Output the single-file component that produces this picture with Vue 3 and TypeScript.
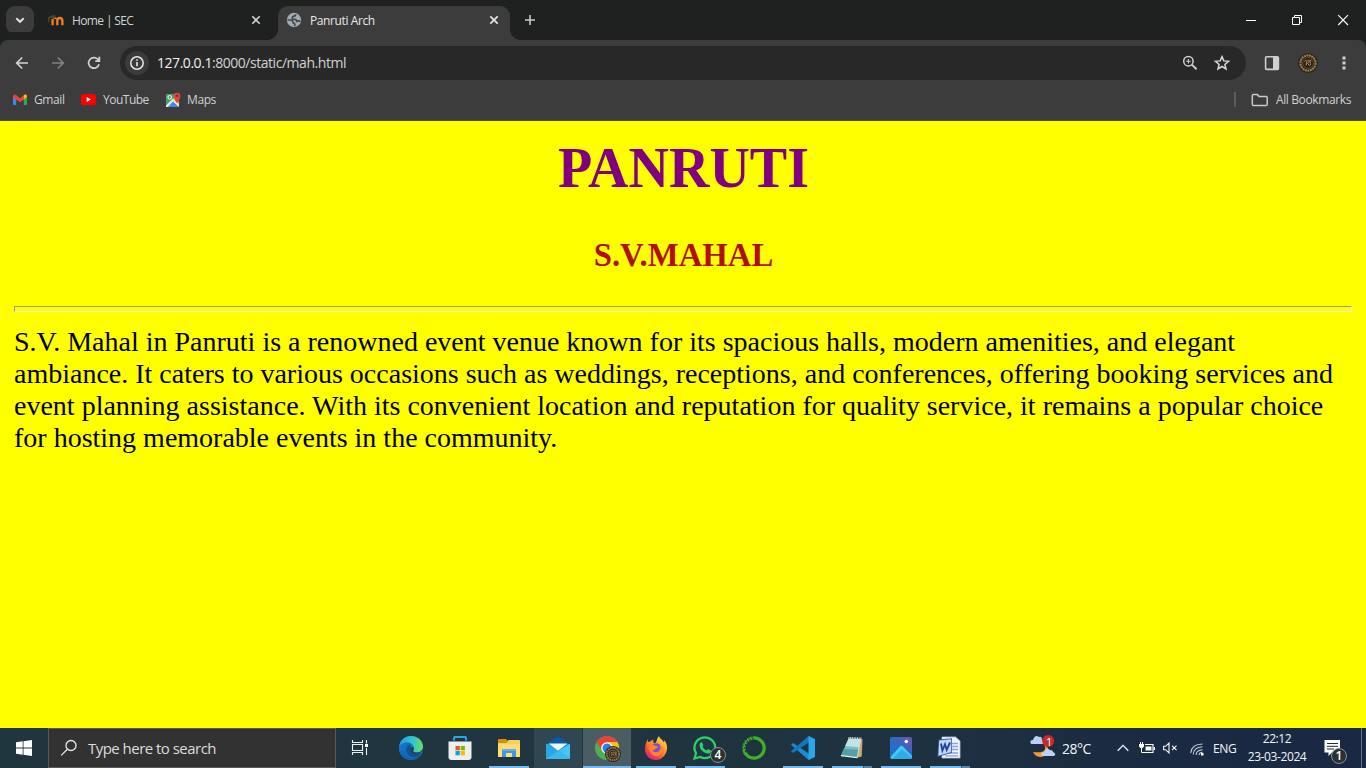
<script setup lang="ts">
const lines: string[] = [
  'S.V. Mahal in Panruti is a renowned event venue known for its spacious halls, modern amenities, and elegant',
  'ambiance. It caters to various occasions such as weddings, receptions, and conferences, offering booking services and',
  'event planning assistance. With its convenient location and reputation for quality service, it remains a popular choice',
  'for hosting memorable events in the community.',
]
</script>

<template>
  <div class="screen">
    <header class="tabs">
      <button class="tabsearch" aria-label="Search tabs">
        <svg width="28" height="28" viewBox="0 0 28 28"><path d="M10.3 12.2l3.7 3.6 3.7-3.6" fill="none" stroke="#e3e3e3" stroke-width="1.9" /></svg>
      </button>
      <div class="tab">
        <svg class="fav" width="16" height="16" viewBox="0 0 16 16">
          <path d="M4.6 7v6.2M9.3 13.2V8.6Q9.4 6 11.8 6t2.6 2.6v4.6" fill="none" stroke="#f08019" stroke-width="2.3" />
          <path d="M5.5 6.6Q8 5.2 9.3 7.6" fill="none" stroke="#d9741c" stroke-width="1.6" />
          <path d="M0 5.2L4.6 3l3.6.8-2.9 2.6-2.3-.5-1.7.9z" fill="#4b4039" />
          <path d="M.8 5.5v4.6" stroke="#71513b" stroke-width=".9" />
        </svg>
        <span class="title home">Home | SEC</span>
        <svg class="close" width="10" height="10" viewBox="0 0 10 10"><path d="M1.3 1.3l7.4 7.4M8.7 1.3L1.3 8.7" stroke="#d0d2d1" stroke-width="1.6" /></svg>
      </div>
      <div class="tab active">
        <svg class="fav" width="16" height="16" viewBox="0 0 16 16">
          <circle cx="8" cy="8" r="7.2" fill="#a2aab2" />
          <path d="M9.8 2.2Q9.8 4 8 4.2T6.2 6.2q.4 1.2 2.4 1.2t2.2 1.8q1.6-.6 3.6.2M1.6 8h3.2q2 .2 2 1.8t1.8 1.8q.6 1-.2 2.6" fill="none" stroke="#40464a" stroke-width="1.7" />
        </svg>
        <span class="title arch">Panruti Arch</span>
        <svg class="close" width="10" height="10" viewBox="0 0 10 10"><path d="M1.3 1.3l7.4 7.4M8.7 1.3L1.3 8.7" stroke="#e5e5e5" stroke-width="1.7" /></svg>
      </div>
      <svg class="plus" width="12" height="12" viewBox="0 0 12 12"><path d="M6 1v10M1 6h10" stroke="#c6c9c8" stroke-width="1.6" /></svg>
      <div class="winbtns">
        <svg width="46" height="40" viewBox="0 0 46 40"><path d="M18 20.5h10" stroke="#fff" /></svg>
        <svg width="46" height="40" viewBox="0 0 46 40"><path d="M18.5 17.5h7v7h-7zM20.5 17v-1.5h7v7H26" fill="none" stroke="#fff" /></svg>
        <svg width="46" height="40" viewBox="0 0 46 40"><path d="M18.2 15.2l9.8 9.8M28 15.2L18.2 25" stroke="#fff" stroke-width="1.15" /></svg>
      </div>
    </header>

    <nav class="toolbar">
      <svg class="back" width="16" height="16" viewBox="0 0 16 16"><path d="M14 8H3M8.2 2.5L2.7 8l5.5 5.5" fill="none" stroke="#d3d3d3" stroke-width="1.7" /></svg>
      <svg class="fwd" width="16" height="16" viewBox="0 0 16 16"><path d="M2 8h11M7.8 2.5L13.3 8l-5.5 5.5" fill="none" stroke="#828282" stroke-width="1.7" /></svg>
      <svg class="reload" width="16" height="16" viewBox="0 0 16 16"><path d="M13 9.2A5.3 5.3 0 1 1 11.8 4.3L13.7 6" fill="none" stroke="#d3d3d3" stroke-width="1.7" /><path d="M14.2 1.8v5.1H9.3V5.2h3.1V1.8z" fill="#d3d3d3" /></svg>
      <div class="omnibox">
        <svg class="info" width="24" height="24" viewBox="0 0 24 24"><circle cx="12" cy="12" r="12" fill="#3b3b3b" /><circle cx="12" cy="12" r="6.2" fill="none" stroke="#e6e6e6" stroke-width="1.5" /><path d="M12 11v4.2M12 8.2v1.6" stroke="#e6e6e6" stroke-width="1.6" /></svg>
        <span class="url"><b>127.0.0.1</b>:8000/static/mah.html</span>
        <svg class="lens" width="16" height="16" viewBox="0 0 16 16"><circle cx="6.4" cy="6.2" r="4.7" fill="none" stroke="#d0d0d0" stroke-width="1.5" /><path d="M9.8 9.6l4.8 4.7" stroke="#d0d0d0" stroke-width="1.9" /><path d="M6.4 4v4.4M4.2 6.2h4.4" stroke="#d0d0d0" stroke-width="1.1" /></svg>
        <svg class="star" width="16" height="16" viewBox="0 0 16 16"><path d="M8 1.6l1.8 4.3 4.7.4-3.6 3.1L12 14l-4-2.5L4 14l1.1-4.6-3.6-3.1 4.7-.4z" fill="none" stroke="#d7d7d7" stroke-width="1.5" /></svg>
      </div>
      <svg class="panel" width="16" height="16" viewBox="0 0 16 16"><rect x="1.6" y="1.8" width="12.8" height="12.6" rx="1" fill="none" stroke="#cfcfcf" stroke-width="1.6" /><path d="M9 2h5.5v12.5H9z" fill="#cfcfcf" /></svg>
      <svg class="avatar" width="20" height="20" viewBox="0 0 20 20"><circle cx="10" cy="10" r="9.8" fill="#221d1e" /><circle cx="10" cy="10" r="7.6" fill="none" stroke="#9b7b48" stroke-width="2.2" stroke-dasharray="2.1 .5" /><circle cx="10" cy="10" r="5.4" fill="#29211b" stroke="#87683b" stroke-width=".6" /><path d="M6.5 8.5q2-2.5 2.3 0L8 12.5M9.5 7.2q2.6-.6 1.6 1.6l-1.6 1.4 2 2.6M13.5 7q-2 .3-1.4 2t.2 3.3" fill="none" stroke="#b18b4d" stroke-width="1" /></svg>
      <svg class="more" width="4" height="16" viewBox="0 0 4 16"><path d="M.5 1.4h3v3h-3zM.5 6.5h3v3h-3zM.5 11.6h3v3h-3z" fill="#d0d0d0" /></svg>
    </nav>

    <div class="bookmarks">
      <svg class="gm" width="14" height="12" viewBox="0 0 14 12"><path d="M0 2l3.2 2.4V11H1Q0 11 0 10z" fill="#4285f4" /><path d="M10.8 4.4L14 2v8q0 1-1 1h-2.2z" fill="#34a853" /><path d="M0 2Q1-.2 3 1l4 3.2L11 1q2-1.2 3 1v1.2L7 8.3 0 3.2z" fill="#ea4335" /><path d="M10.8 1.2Q13-.3 14 2v1l-3.2 2.5z" fill="#fbbc04" /></svg>
      <span class="gtext">Gmail</span>
      <svg class="yt" width="15" height="11" viewBox="0 0 15 11"><rect width="15" height="11" rx="2.6" fill="#f00" /><path d="M5.7 3v5l4.2-2.5z" fill="#fff" /></svg>
      <span class="ytext">YouTube</span>
      <svg class="mp" width="15" height="16" viewBox="0 0 15 16"><rect y="2" width="13" height="13" rx="1" fill="#4aa067" /><path d="M6.5 9l6 6H.8z" fill="#4285f4" /><path d="M0 13.5l7-7 6 6V15l-6-5.6L1.8 15H0z" fill="#eee" /><path d="M7 6.5l2-1 4 5v2z" fill="#fbc02d" /><circle cx="3.7" cy="5.3" r="1.8" fill="none" stroke="#fff" stroke-width="1" /><path d="M11 11.2Q7.8 7 7.8 4a3.3 3.3 0 1 1 6.6 0Q14.4 7 11 11.2z" fill="#e24438" /><circle cx="11.1" cy="3.8" r="1.3" fill="#8e2925" /></svg>
      <span class="mtext">Maps</span>
      <i class="divider"></i>
      <svg class="folder" width="18" height="14" viewBox="0 0 18 14"><path d="M1.3 2.6q0-1 1-1h4l1.8 1.8h7.1q1 0 1 1v7.2q0 1-1 1H2.3q-1 0-1-1z" fill="none" stroke="#c8c8c8" stroke-width="1.5" /></svg>
      <span class="all">All Bookmarks</span>
    </div>

    <main class="page">
      <h1>PANRUTI</h1>
      <h3>S.V.MAHAL</h3>
      <hr />
      <div v-for="line in lines" :key="line" class="line">{{ line }}</div>
    </main>

    <footer class="taskbar">
      <div class="start"><svg width="16" height="16" viewBox="0 0 16 16"><path d="M0 2.2L6.7 1.3v6.2H0zM7.5 1.2L16 0v7.5H7.5zM0 8.4h6.7v6.3L0 13.8zM7.5 8.4H16V16l-8.5-1.2z" fill="#fff" /></svg></div>
      <div class="search">
        <svg width="18" height="18" viewBox="0 0 18 18"><circle cx="11" cy="6.5" r="5" fill="none" stroke="#e6e6e6" stroke-width="1.3" /><path d="M7.4 10.2L1.2 16.4" stroke="#e6e6e6" stroke-width="1.3" /></svg>
        <span>Type here to search</span>
      </div>
      <div class="taskview"><svg width="18" height="18" viewBox="0 0 18 18"><path d="M1.5 1v2.5h10V1M1.5 16v-2.5h10V16M1.5 5.5h10v6h-10zM15.5 1v3.5M15.5 9v7" fill="none" stroke="#edf0f1" stroke-width="1.1" /><path d="M14 5h3v3h-3z" fill="#fff" /></svg></div>
      <div class="apps">
        <div class="app">
          <svg width="24" height="24" viewBox="0 0 24 24">
            <defs>
              <linearGradient id="edgeTop"><stop stop-color="#239de2" /><stop offset=".6" stop-color="#34c6c8" /><stop offset="1" stop-color="#72de51" /></linearGradient>
              <linearGradient id="edgeLow" x2="1" y2="1"><stop stop-color="#1279cf" /><stop offset="1" stop-color="#1154a7" /></linearGradient>
            </defs>
            <circle cx="12" cy="12" r="12" fill="#1580d1" />
            <path d="M.2 10.5C1.2 4 6.1 0 12 0c7.4 0 12 5.4 12 10.5 0 4-3 6-6.2 6-2.9 0-4-1.1-3.5-2 .7-.8 1-1.7.6-3C14 8.2 11.3 6.5 8 6.5 4.5 6.5 1.6 8 .2 10.5z" fill="url(#edgeTop)" />
            <path d="M8.8 9.4C5.3 11.5 5.5 19 11.5 21.5c3.5 1.5 7.2 0 10-3.2C19.6 22 16 24 12 24 5.3 24 0 18.6 0 12c0-2.9 3.5-5.5 8-5.5 3.4 0 5.5 1.5 6.6 3.7-1.7-1.5-4-1.9-5.8-.8z" fill="url(#edgeLow)" />
            <path d="M8.8 9.4C5.5 12 6.5 19.5 13 21.2c3.3.8 6-.2 8.8-3.3 1-1.1.1-1.2-1-.7-5.8 2.1-10.7-1-9.2-4.4.6-1.3 1.1-2 .3-3.4-.6-1-2-.8-3.1 0z" fill="#164f98" />
            <path d="M14.8 11.6c.2 1.2 0 2-.6 2.8-.6 1 1 2.1 3.6 2.1 2.8 0 5.2-1.4 6-3.9l.2 2-3.2 2.7c-5 2.1-10-.2-9.4-3.7.2-1.1 1.1-1.4 1-2.6z" fill="#223e49" />
          </svg>
        </div>
        <div class="app">
          <svg width="24" height="24" viewBox="0 0 24 24"><path d="M6 6V2q0-1 1-1h10q1 0 1 1v4" fill="none" stroke="#2ca8df" stroke-width="2" /><path d="M.5 5.5h23V21q0 3-3 3h-17q-3 0-3-3z" fill="#eeeeef" /><path d="M6 5.5V4M18 5.5V4" stroke="#1277bf" stroke-width="2" /><path d="M7.5 10h4.3v4.3H7.5z" fill="#f24f22" /><path d="M12.6 10h4.3v4.3h-4.3z" fill="#7fba00" /><path d="M7.5 15h4.3v4.3H7.5z" fill="#03a4ef" /><path d="M12.6 15h4.3v4.3h-4.3z" fill="#ffb900" /></svg>
        </div>
        <div class="app run">
          <svg width="24" height="24" viewBox="0 0 24 24"><path d="M1 4q0-1 1-1h7l2 2v4H1z" fill="#d69008" /><path d="M1 7h8.5l2-3H22q1 0 1 1v15q0 1-1 1H1z" fill="#fbce5a" /><path d="M1 8h22v12q0 1-1 1H1z" fill="#ffdc78" /><path d="M5 13h14v8h-4v-4H9v4H5z" fill="#3e98de" /><path d="M5 13h14v2H5z" fill="#59b3ee" /></svg>
        </div>
        <div class="app mail">
          <svg width="24" height="24" viewBox="0 0 24 24"><path d="M0 8L12 .5 24 8z" fill="#075ba8" /><path d="M0 8h24v15H0z" fill="#1e9de2" /><path d="M0 8l12 7L24 8v14q0 1-1 1H1q-1 0-1-1z" fill="#27a7e6" /><path d="M2.7 7.6h18.6L12 14.8z" fill="#f3f5f6" /><path d="M24 8L0 23h23q1 0 1-1z" fill="#48c6f1" /><path d="M1 23l12-8.7L24 22q0 1-1 1z" fill="#36ade6" opacity=".55" /></svg>
        </div>
        <div class="app chrome">
          <svg class="wide" width="26" height="26" viewBox="0 0 26 26"><circle cx="12" cy="12" r="12" fill="#4caf50" /><path d="M1.6 6A12 12 0 0 1 22.4 6L12 6.2 7.2 15z" fill="#e84335" /><path d="M22.4 6A12 12 0 0 1 12 24l5-9.2L12 6z" fill="#fbc116" /><circle cx="12" cy="12" r="5.8" fill="#fff" /><circle cx="12" cy="12" r="4.5" fill="#2684eb" /><circle cx="18" cy="18" r="8" fill="#292827" /><circle cx="18" cy="18" r="6.2" fill="none" stroke="#91764a" stroke-width="1.8" stroke-dasharray="1.8 .5" /><circle cx="18" cy="18" r="3.9" fill="#332b21" stroke="#765d38" /><path d="M15.8 17q1.5-1.5 1.5.5l-.6 2.4M18.3 16q1.8 0 .6 1.5l-.8.8 1.3 1.7M20.6 16.4v3" fill="none" stroke="#a98b58" stroke-width=".9" /></svg>
        </div>
        <div class="app run">
          <svg width="24" height="24" viewBox="0 0 24 24">
            <defs><linearGradient id="fox" x1=".9" y1="0" x2=".2" y2="1"><stop stop-color="#ffe849" /><stop offset=".42" stop-color="#ff9a28" /><stop offset=".78" stop-color="#f53e4b" /><stop offset="1" stop-color="#dd198d" /></linearGradient></defs>
            <path d="M3.7 3.2L4 6.1l2.2-.5 3-2.2v3l2.1.8C13 5.5 12.8 2.3 15 0c.3 2.2 3 3.1 5 6.5l.3-2.3c2.6 3.2 3.2 6.2 2.6 9.5C22 19.5 17.5 24 11.8 24 5.6 24 1 19.3 1 13.2 1 8.9 2.5 5.6 3.7 3.2z" fill="url(#fox)" /><circle cx="12.2" cy="12" r="4.8" fill="#7650d8" /><path d="M5 9.7c2-1.8 4.5-1.1 6.2.3 1.5.2 2.8.3 2.8 1 0 .8-2 1.2-2.8 1.8-.6 1.2-1.8 1.9-3.3 1.5 1.2 2 4.5 2.6 6.5 1.3 2.5-1.6 2.7-4.7.8-6.8 3 1 5 4 4 7-1.7 4.5-8.2 6.3-12 2.1C5.2 15.7 4.3 12.4 5 9.7z" fill="#ff8430" />
          </svg>
        </div>
        <div class="app run">
          <svg width="24" height="24" viewBox="0 0 24 24"><path d="M1.5 22.5L3 17.2A10.4 10.4 0 1 1 7.1 21z" fill="#203746" stroke="#2bd366" stroke-width="2.2" /><path d="M7 7.2q1.1-1.6 2-.8l1.4 2.8-.9 1.5q1.5 2.7 4 3.8l1.5-1.5 3 1.5q-.4 3.6-3.8 3-7.5-2.1-7.7-8.8" fill="#2bd366" /></svg>
          <span class="badge four">4</span>
        </div>
        <div class="app">
          <svg width="24" height="24" viewBox="0 0 24 24"><circle cx="12" cy="12" r="10.2" fill="none" stroke="#3eb02a" stroke-width="3.2" /><path d="M11 .8A11.2 11.2 0 0 0 1 15M12 3A9 9 0 0 0 4.4 17" fill="none" stroke="#203641" stroke-width="1.2" stroke-dasharray="1.8 1.5" /></svg>
        </div>
        <div class="app run">
          <svg width="24" height="24" viewBox="0 0 24 24"><path d="M0 8.8l2-1.9L18.5 18v6L17 23.5z" fill="#188cd6" /><path d="M0 15.2l2 1.9L18.5 6V0L17 .5z" fill="#1476bb" /><path d="M17.5 0L24 3v18l-6.5 3z" fill="#29a7ec" /></svg>
        </div>
        <div class="app run multi">
          <svg width="24" height="24" viewBox="0 0 24 24"><path d="M19 4l3.5-1-.8 17.5-4.4 1.2z" fill="#c7a978" /><path d="M8.5 2.8L20.5 3l-3.2 18.6L1 19.6z" fill="#7dbcc4" /><path d="M8.5 2.8l12 .2-1.4 8.2L5.2 10z" fill="#c3e3e6" /><path d="M4 13l14.5 1-1.2 7.6L1 19.6z" fill="#529fa8" /><path d="M1 19.6l16.3 2" stroke="#e7f2ee" stroke-width="1.2" /><path d="M8.5 2l13.5.5" stroke="#dfe4df" stroke-width="2" stroke-dasharray="1 .7" /><path d="M20.6 3l-3.2 18" stroke="#e5eded" stroke-width=".8" /></svg>
        </div>
        <div class="app run">
          <svg width="24" height="24" viewBox="0 0 24 24"><defs><linearGradient id="photo" x1="0" y1="1" x2="1" y2="0"><stop stop-color="#1776d2" /><stop offset=".6" stop-color="#3765bf" /><stop offset="1" stop-color="#7651b6" /></linearGradient></defs><rect x="1" y="1" width="22" height="22" rx="2" fill="url(#photo)" /><path d="M1.5 21L11 10.5q1.5-1.5 3 0L23 20v1q0 2-2 2H3q-1.5 0-1.5-2z" fill="#43c9f2" /><path d="M10 16l3-2.8 9.5 8.6Q22 23 21 23H3.5z" fill="#269fe1" opacity=".7" /><circle cx="17.3" cy="5.5" r="1.8" fill="#fff" /></svg>
        </div>
        <div class="app run multi word">
          <svg width="24" height="24" viewBox="0 0 24 24"><path d="M5 1h13.5L23 5v17H5z" fill="#eff3fc" stroke="#b9c5df" stroke-width=".8" /><path d="M14 7.5h7M14 10.5h7M14 13.5h7M8 17h13M8 19.8h13" stroke="#8ba4d8" stroke-width="1.3" /><path d="M1.5 3.5L15 2.2v14.6L.5 21z" fill="#335ead" /><path d="M2.2 4.4l12-1.1v12.8L1.4 19.7z" fill="#c6d6f2" /><path d="M4 7.5l1.4 7 2.6-6.3 1.7 5.6L13 6.5" fill="none" stroke="#2047a0" stroke-width="1.9" /></svg>
        </div>
      </div>
      <svg class="weather" width="26" height="24" viewBox="0 0 26 24"><path d="M14 9q5 10-11 8 2 5 8 5 8-1 7-9z" fill="#f69b29" /><path d="M1 9q-2-4 2-4 2-6 6-3 3-1 3 3 4 1 2 4z" fill="#b8cef3" /><path d="M12 21q-2-4 2-4 2-6 6-2 3 0 3 2 4 2 1 4H12z" fill="#bcd1f4" /><circle cx="18.2" cy="6" r="6" fill="#c6292e" /></svg>
      <span class="alert">1</span>
      <span class="temp">28°C</span>
      <svg class="up" width="12" height="8" viewBox="0 0 12 8"><path d="M.7 6.8L6 1.4l5.3 5.4" fill="none" stroke="#eef1f5" stroke-width="1.3" /></svg>
      <svg class="battery" width="16" height="12" viewBox="0 0 16 12"><path d="M3 10.5h11v-8H6" fill="none" stroke="#fff" stroke-width="1.1" /><path d="M6.5 4.5h6v4h-6zM14.5 5H16v3h-1.5zM0 2h5v2.5L3.5 6h-2L0 4.5z" fill="#fff" /><path d="M1.5 0v2M3.5 0v2M2.5 5.5v5h1" fill="none" stroke="#fff" /></svg>
      <svg class="sound" width="15" height="12" viewBox="0 0 15 12"><path d="M.6 4.3h2L6 1v10L2.6 7.7h-2zM9 3.7l4.5 4.5M13.5 3.7L9 8.2" fill="none" stroke="#f5f6f8" stroke-width="1.1" /></svg>
      <svg class="wifi" width="14" height="13" viewBox="0 0 14 13"><path d="M.7 10Q1.5 1.2 12.5 1M3.2 11.5Q3.8 4.4 12.5 3.8M6 12Q6.2 7.2 12.5 6.7M9 12Q9.2 9.6 12.5 9.3" fill="none" stroke="#c8cfdb" stroke-width="1.1" /><path d="M11 10h2.5v2.5H11z" fill="#fff" /></svg>
      <span class="eng">ENG</span>
      <div class="clock"><span class="time">22:12</span><span class="date">23-03-2024</span></div>
      <div class="action">
        <svg width="17" height="16" viewBox="0 0 17 16"><path d="M.5 0H16v12.5H8L4.5 16v-3.5h-4z" fill="#fff" /><path d="M3 3.5h11M3 6.3h11M3 9h7" stroke="#1d2a42" /></svg>
        <span class="badge one">1</span>
      </div>
      <i class="edge"></i>
    </footer>
  </div>
</template>

<style>
body { margin: 0; overflow: hidden; }
</style>

<style scoped>
* { box-sizing: border-box; }
.screen { width: 1366px; height: 768px; display: flex; flex-direction: column; overflow: hidden; font-family: "Open Sans", "Noto Sans", sans-serif; background: #ff0; }
svg { display: block; flex: none; overflow: visible; }
span { white-space: nowrap; }
.tabs { height: 40px; display: flex; align-items: center; background: #1f2120; flex: none; }
.tabsearch { width: 28px; height: 28px; margin: 0 0 0 6px; padding: 0; border: 0; border-radius: 9px; background: #3c3c3c; flex: none; }
.tab { width: 244px; height: 40px; display: flex; align-items: center; flex: none; padding-left: 14px; }
.tab .fav { margin-right: 8px; }
.title { font-size: 12px; line-height: 16px; flex: 1; padding-top: 1px; color: #d0d3d2; }
.tab .close { margin-right: 17px; }
.tab.active { width: 232px; height: 34px; align-self: flex-end; padding: 0 0 6px 8px; border-radius: 10px 10px 0 0; background: #3c3c3c; position: relative; }
.tab.active::before, .tab.active::after { content: ""; position: absolute; bottom: 0; width: 10px; height: 10px; }
.tab.active::before { left: -10px; background: radial-gradient(circle at 0 0, transparent 9.5px, #3c3c3c 10px); }
.tab.active::after { right: -10px; background: radial-gradient(circle at 100% 0, transparent 9.5px, #3c3c3c 10px); }
.active .title { color: #e8e8e8; }
.active .close { margin-right: 11px; }
.home { letter-spacing: -.63px; }
.arch { letter-spacing: -.4px; }
.plus { margin-left: 14px; }
.winbtns { display: flex; margin-left: auto; }
.toolbar { height: 46px; flex: none; display: flex; align-items: center; background: #3c3c3c; border-radius: 8px 8px 0 0; box-shadow: 0 -8px 0 #1f2120; padding-left: 14px; }
.fwd { margin-left: 20px; }
.reload { margin-left: 20px; }
.omnibox { width: 1126px; height: 34px; margin-left: 18px; padding-left: 5px; border-radius: 17px; background: #282828; display: flex; align-items: center; }
.url { margin-left: 8px; font-size: 14px; line-height: 20px; letter-spacing: -.46px; color: #d2d2d2; flex: 1; }
.url b { font-weight: 400; color: #f1f1f1; }
.star { margin: 0 16px; }
.panel { margin-left: 18px; }
.avatar { margin-left: 18px; }
.more { margin-left: 24px; }
.bookmarks { height: 35px; flex: none; display: flex; align-items: center; padding: 0 0 7px 13px; background: #3c3c3c; border-bottom: 1px solid #4b4b47; font-size: 12px; line-height: 16px; color: #d1d1d1; }
.gtext { width: 31px; margin-left: 7px; letter-spacing: -.4px; }
.yt { margin-left: 16px; }
.ytext { width: 46px; margin-left: 7px; letter-spacing: -.5px; }
.mp { margin-left: 17px; }
.mtext { margin-left: 6px; letter-spacing: -.4px; }
.divider { width: 2px; height: 15px; margin-left: auto; background: #5c5c5c; }
.folder { margin-left: 15px; }
.all { width: 90px; margin-left: 7px; letter-spacing: -.38px; }
.page { height: 607px; flex: none; padding: 15px 14px 0; background: #ff0; color: #000; font: 28px "Liberation Serif", "Times New Roman", serif; }
.page h1 { margin: 0 0 36.5px; padding-left: 1px; font-size: 56px; line-height: 64px; text-align: center; color: #800080; }
.page h3 { margin: 0 0 32.76px; padding-left: 1px; font-size: 32.76px; line-height: 37px; text-align: center; color: #b01005; }
.page hr { height: 6px; margin: 0 0 14px; }
.line { height: 32px; line-height: 32px; white-space: nowrap; }
.taskbar { height: 40px; flex: none; display: flex; align-items: center; color: #f3f5f7; background: linear-gradient(90deg, #20363f 0%, #20353f 45%, #1e3140 68%, #1b2b42 82%, #1a2843 100%); }
.start { width: 48px; padding-left: 16px; }
.search { width: 288px; height: 40px; display: flex; align-items: center; padding-left: 11px; border: 1px solid #585a5b; background: #323232; color: #ddd; }
.search span { margin-left: 10px; font-size: 15px; line-height: 20px; letter-spacing: -.53px; }
.taskview { width: 51px; padding-left: 15px; }
.apps { display: flex; gap: 1px; }
.app { width: 48px; height: 40px; padding-top: 8px; display: flex; justify-content: center; position: relative; }
.run::after, .chrome::after { content: ""; position: absolute; left: 4px; right: 4px; bottom: 0; height: 2px; background: #76b9ed; }
.chrome::after { left: 0; right: 0; }
.multi::after { background: linear-gradient(90deg, #76b9ed 31px, #385b74 31px, #385b74 32px, #5686ac 32px); }
.word { padding-right: 3px; }
.mail { background: #304650; }
.chrome { background: #4a5d65; }
.chrome .wide { margin-left: 2px; }
.badge { position: absolute; display: flex; align-items: center; justify-content: center; width: 16px; height: 16px; border: 1px solid #8a8f92; border-radius: 50%; background: #2b3034; color: #fff; font-size: 12px; line-height: 12px; font-weight: 600; }
.four { left: 29px; top: 19px; }
.weather { margin-left: 56px; position: relative; top: -1px; }
.alert { width: 0; position: relative; left: -10px; top: -6px; font-size: 11px; line-height: 12px; color: #fff; }
.temp { margin-left: 6px; width: 33px; font-size: 14px; letter-spacing: -.5px; }
.up { margin-left: 22px; }
.battery { margin-left: 10px; }
.sound { margin-left: 8px; }
.wifi { margin-left: 12px; margin-top: 2px; }
.eng { width: 24px; margin-left: 9px; font-size: 12px; letter-spacing: -.4px; }
.clock { width: 60px; margin-left: 10px; display: flex; flex-direction: column; align-items: center; font-size: 12px; line-height: 18px; padding-bottom: 1px; }
.time, .date { letter-spacing: -.4px; }
.action { margin-left: 17px; position: relative; }
.one { left: 7px; top: 8px; }
.edge { width: 1px; height: 40px; margin-left: auto; margin-right: 4px; background: #64718a; }
</style>
